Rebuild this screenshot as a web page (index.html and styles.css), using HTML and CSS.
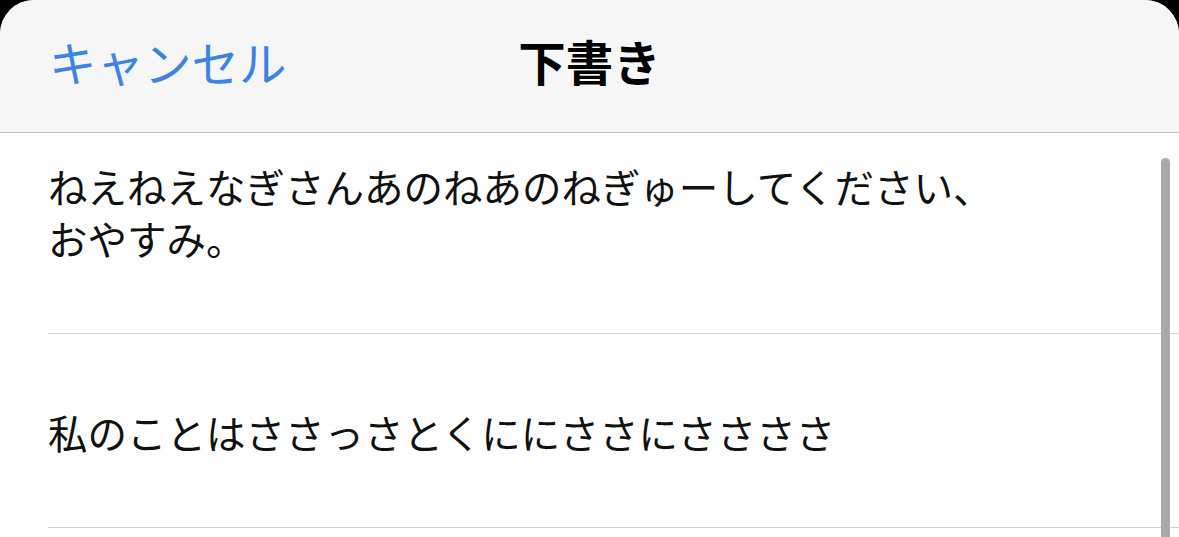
FILE: index.html
```html
<!DOCTYPE html>
<html lang="ja">
<head>
<meta charset="utf-8">
<link rel="stylesheet" href="styles.css">
</head>
<body>
<div class="sheet">
  <header class="nav">
    <span class="cancel">キャンセル</span>
    <h1 class="title">下書き</h1>
  </header>
  <div class="list">
    <div class="row">
      <p class="text">ねえねえなぎさんあのねあのねぎゅーしてください、<br>おやすみ。</p>
    </div>
    <div class="row">
      <p class="text">私のことはささっさとくににささにささささ</p>
    </div>
    <div class="scrollbar"></div>
  </div>
</div>
</body>
</html>
```
FILE: styles.css
```css
html, body {
  margin: 0;
  padding: 0;
  background: #000;
}
body {
  width: 1179px;
  height: 537px;
  overflow: hidden;
  font-family: "Noto Sans CJK JP", "Noto Sans", sans-serif;
}
.sheet {
  width: 1179px;
  height: 537px;
  background: #fff;
  border-radius: 34px 34px 0 0;
  overflow: hidden;
  position: relative;
}
.nav {
  height: 132px;
  background: #f6f6f6;
  border-bottom: 1px solid #c4c4c4;
  display: flex;
  align-items: center;
  justify-content: center;
  position: relative;
}
.cancel {
  position: absolute;
  left: 49px;
  top: 35px;
  font-size: 47.5px;
  line-height: 54px;
  color: #3b84e6;
}
.title {
  margin: 0 0 10px;
  font-size: 47.5px;
  line-height: 54px;
  font-weight: 700;
  color: #000;
}
.list {
  position: relative;
}
.row {
  margin-left: 48px;
  min-height: 194px;
  box-sizing: border-box;
  padding: 27px 0 69px;
  border-bottom: 1px solid #cfcfcf;
  display: flex;
  flex-direction: column;
  justify-content: flex-end;
}
.text {
  margin: 0;
  font-size: 39.5px;
  line-height: 52px;
  color: #111;
}
.scrollbar {
  position: absolute;
  right: 9px;
  top: 25px;
  width: 9px;
  height: 420px;
  border-radius: 5px;
  background: #a9a9a9;
}
```
